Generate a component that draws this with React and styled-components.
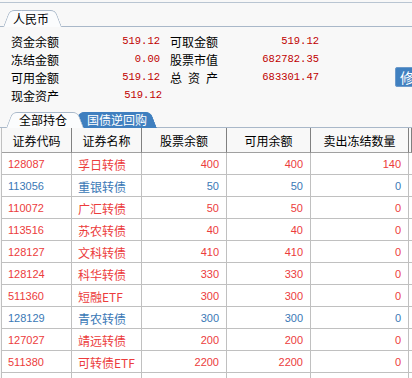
import styled, { createGlobalStyle } from "styled-components";

const GlobalStyle = createGlobalStyle`
  html, body {
    margin: 0;
    padding: 0;
    background: #f8f8f8;
    overflow: hidden;
  }
  * {
    box-sizing: border-box;
  }
`;

const Page = styled.div`
  width: 412px;
  height: 378px;
  overflow: hidden;
  background: #f8f8f8;
  font-family: "Noto Sans CJK SC", "Liberation Sans", sans-serif;
  font-size: 12px;
  color: #000;
`;

const TabBar = styled.div`
  display: flex;
  align-items: flex-end;
  height: ${({ $h }) => $h}px;
  padding-left: ${({ $pad }) => $pad}px;
  margin-top: ${({ $top }) => ($top ? 2 : 0)}px;
  border-top: ${({ $top }) => ($top ? "1px solid #b9c5d2" : "none")};
  border-bottom: 1px solid #a9b8c9;
`;

const Tab = styled.div`
  position: relative;
  isolation: isolate;
  display: flex;
  align-items: center;
  height: ${({ $h }) => $h}px;
  padding: 0 ${({ $pr }) => $pr}px 0 ${({ $pl }) => $pl}px;
  margin-left: ${({ $ml }) => $ml || 0}px;
  margin-bottom: -1px;
  z-index: ${({ $z }) => $z};
  color: ${({ $blue }) => ($blue ? "#fff" : "#000")};
  line-height: 1;
  white-space: nowrap;

  &::before,
  &::after {
    content: "";
    position: absolute;
    top: 0;
    bottom: 0;
    width: 56%;
    z-index: -1;
    background: ${({ $blue }) => ($blue ? "#3f7fbf" : "#fbfcfd")};
    border-top: 1px solid ${({ $blue }) => ($blue ? "#3f7fbf" : "#a9b8c9")};
  }

  &::before {
    left: 0;
    border-left: 1px solid ${({ $blue }) => ($blue ? "#3f7fbf" : "#a9b8c9")};
    border-radius: 5px 0 0 0;
    transform: skewX(-21deg);
    transform-origin: bottom left;
  }

  &::after {
    right: 0;
    border-right: 1px solid ${({ $blue }) => ($blue ? "#3f7fbf" : "#a9b8c9")};
    border-radius: 0 5px 0 0;
    transform: skewX(21deg);
    transform-origin: bottom right;
  }
`;

const Info = styled.div`
  height: 77px;
  padding: 5px 0 0 11px;
`;

const InfoRow = styled.div`
  display: grid;
  grid-template-columns: 60px 89px 70px 89px 76px 44px;
  align-items: center;
  height: 18px;
`;

const Label = styled.span`
  padding-left: ${({ $indent }) => ($indent ? 10 : 0)}px;
  letter-spacing: ${({ $spread }) => ($spread ? 6 : 0)}px;
  white-space: nowrap;
`;

const Money = styled.span`
  font-family: "Liberation Mono", monospace;
  font-size: 10.5px;
  color: #c00000;
  text-align: right;
  margin-right: ${({ $shift }) => -($shift || 0)}px;
`;

const EditButton = styled.button`
  grid-column: 6;
  height: 20px;
  width: 40px;
  margin: -1px 0;
  padding: 0 0 0 4px;
  border: 1px solid #6c9acb;
  border-radius: 2px;
  background: #4080c0;
  color: #fff;
  font-family: "Noto Sans CJK SC", sans-serif;
  font-size: 14px;
  line-height: 1;
  text-align: left;
  white-space: nowrap;
`;

const Table = styled.div`
  margin-left: 1px;
  border-left: 1px solid #c0c0c0;
  background: #fff;
`;

const Row = styled.div`
  display: grid;
  grid-template-columns: 70px 70px 85px 84px 98px 1fr;
  height: ${({ $head }) => ($head ? 25 : 22)}px;
  background: ${({ $head }) => ($head ? "#f8f8f8" : "#fff")};
`;

const HeadCell = styled.div`
  display: flex;
  align-items: center;
  justify-content: center;
  border-right: 1px solid #808080;
  border-bottom: 1px solid #a0a0a0;
  font-size: 12px;
  white-space: nowrap;
`;

const Cell = styled.div`
  display: flex;
  align-items: center;
  justify-content: ${({ $right }) => ($right ? "flex-end" : "flex-start")};
  padding: 1px ${({ $right }) => ($right ? 7 : 0)}px 0 ${({ $right }) => ($right ? 0 : 6)}px;
  border-right: 1px solid #c0c0c0;
  border-bottom: 1px solid #c0c0c0;
  color: ${({ $blue }) => ($blue ? "#3a78b6" : "#ec3c3c")};
  font-family: ${({ $num }) =>
    $num ? '"Liberation Sans", sans-serif' : '"Noto Sans CJK SC", sans-serif'};
  font-size: ${({ $num }) => ($num ? 11 : 12)}px;
  white-space: nowrap;
`;

const headers = ["证券代码", "证券名称", "股票余额", "可用余额", "卖出冻结数量", ""];

const holdings = [
  { code: "128087", name: "孚日转债", qty: 400, avail: 400, frozen: 140 },
  { code: "113056", name: "重银转债", qty: 50, avail: 50, frozen: 0, blue: true },
  { code: "110072", name: "广汇转债", qty: 50, avail: 50, frozen: 0 },
  { code: "113516", name: "苏农转债", qty: 40, avail: 40, frozen: 0 },
  { code: "128127", name: "文科转债", qty: 410, avail: 410, frozen: 0 },
  { code: "128124", name: "科华转债", qty: 330, avail: 330, frozen: 0 },
  { code: "511360", name: "短融ETF", qty: 300, avail: 300, frozen: 0 },
  { code: "128129", name: "青农转债", qty: 300, avail: 300, frozen: 0, blue: true },
  { code: "127027", name: "靖远转债", qty: 200, avail: 200, frozen: 0 },
  { code: "511380", name: "可转债ETF", qty: 2200, avail: 2200, frozen: 0 },
];

export default function App() {
  return (
    <Page>
      <GlobalStyle />
      <TabBar $top $h={25} $pad={3}>
        <Tab $h={17} $pl={10} $pr={13} $z={1}>
          人民币
        </Tab>
      </TabBar>

      <Info>
        <InfoRow>
          <Label>资金余额</Label>
          <Money>519.12</Money>
          <Label $indent>可取金额</Label>
          <Money>519.12</Money>
        </InfoRow>
        <InfoRow>
          <Label>冻结金额</Label>
          <Money>0.00</Money>
          <Label $indent>股票市值</Label>
          <Money>682782.35</Money>
        </InfoRow>
        <InfoRow>
          <Label>可用金额</Label>
          <Money>519.12</Money>
          <Label $indent $spread>
            总资产
          </Label>
          <Money>683301.47</Money>
          <EditButton>修改</EditButton>
        </InfoRow>
        <InfoRow>
          <Label>现金资产</Label>
          <Money $shift={2}>519.12</Money>
        </InfoRow>
      </Info>

      <TabBar $h={24} $pad={6}>
        <Tab $h={16} $pl={13} $pr={17} $z={2}>
          全部持仓
        </Tab>
        <Tab $h={16} $pl={14} $pr={10} $ml={-11} $z={1} $blue>
          国债逆回购
        </Tab>
      </TabBar>

      <Table>
        <Row $head>
          {headers.map((h, i) => (
            <HeadCell key={i}>{h}</HeadCell>
          ))}
        </Row>
        {holdings.map((r) => (
          <Row key={r.code}>
            <Cell $num $blue={r.blue}>
              {r.code}
            </Cell>
            <Cell $blue={r.blue}>{r.name}</Cell>
            <Cell $num $right $blue={r.blue}>
              {r.qty}
            </Cell>
            <Cell $num $right $blue={r.blue}>
              {r.avail}
            </Cell>
            <Cell $num $right $blue={r.blue}>
              {r.frozen}
            </Cell>
            <Cell />
          </Row>
        ))}
        <Row>
          <Cell />
          <Cell />
          <Cell />
          <Cell />
          <Cell />
          <Cell />
        </Row>
      </Table>
    </Page>
  );
}
